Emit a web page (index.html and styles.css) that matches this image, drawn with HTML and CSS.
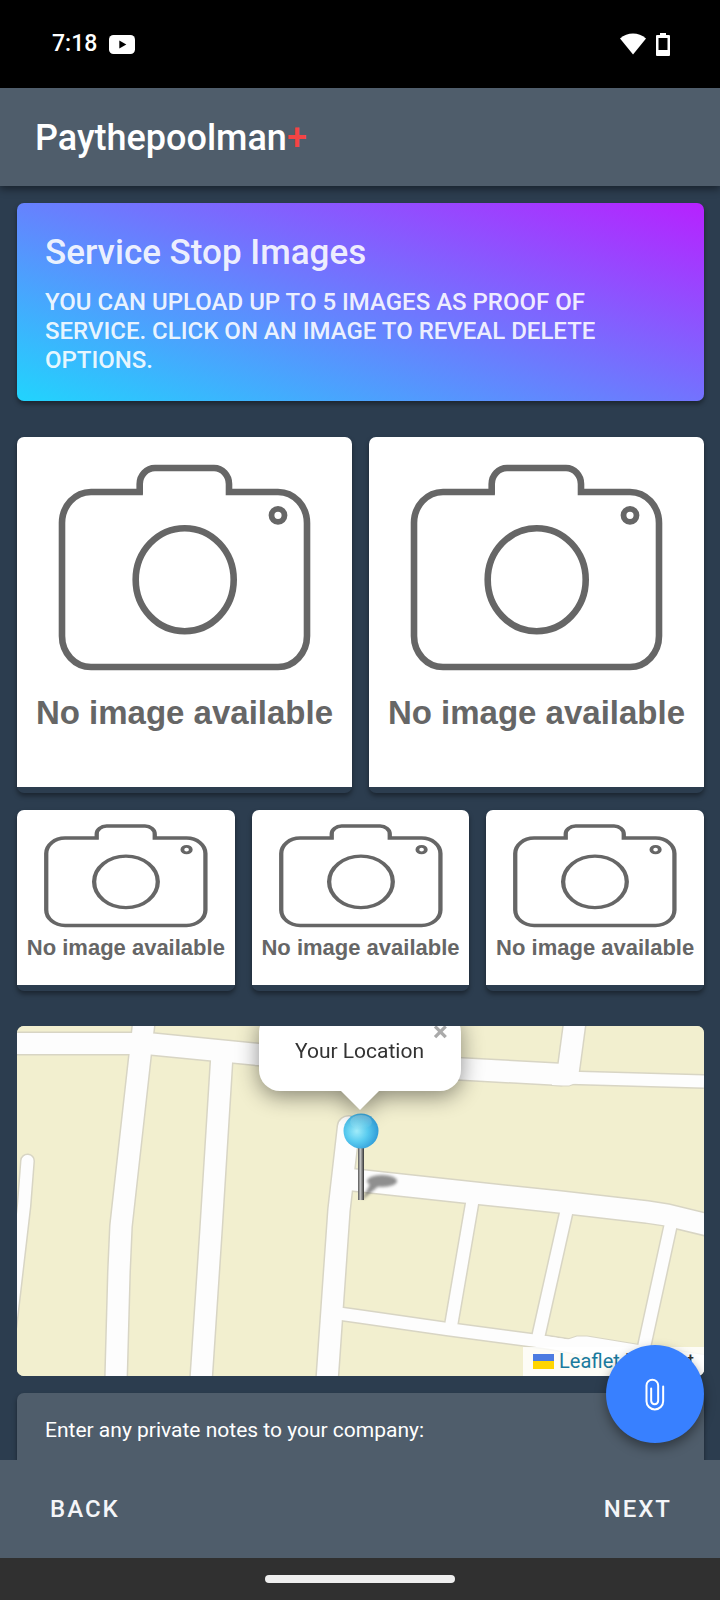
FILE: index.html
```
<!DOCTYPE html>
<html lang="en">
<head>
<meta charset="utf-8">
<meta name="viewport" content="width=device-width, initial-scale=1">
<title>Paythepoolman+</title>
<link rel="stylesheet" href="styles.css">
</head>
<body>
<svg class="defs" aria-hidden="true">
  <defs>
    <g id="camera" fill="none" stroke="#666" stroke-width="6.6">
      <path d="M125.900 56H74a29 31 0 0 0-29 31V200a29 31 0 0 0 29 31H261a29 31 0 0 0 29-31V87a29 31 0 0 0-29-31H212V48a15 16 0 0 0-15-16H138a15.300 16 0 0 0-15.300 16V58"/>
      <ellipse cx="167.700" cy="143.700" rx="49" ry="51.500"/>
      <circle cx="261" cy="79.300" r="6.500" stroke-width="5.800"/>
    </g>
  </defs>
</svg>
<div class="app">
  <div class="status">
    <div class="status-group">
      <span class="clock">7:18</span>
      <svg width="26" height="19" viewBox="0 0 26 19" aria-hidden="true"><rect width="26" height="19" rx="4.500" fill="#fff"/><path d="M10.300 5.600v8l7-4z" fill="#000"/></svg>
    </div>
    <div class="status-group status-icons">
      <svg width="26" height="22" viewBox="0 0 26 22" aria-hidden="true"><path d="M13 21.500 0 5.500C7.500-1.300 18.500-1.300 26 5.500Z" fill="#fff"/></svg>
      <svg width="14" height="23" viewBox="0 0 14 23" aria-hidden="true"><path fill="#fff" fill-rule="evenodd" d="M4 0h6v2h3q1 0 1 1v19q0 1-1 1H1q-1 0-1-1V3q0-1 1-1h3zM2.500 5v12h9V5z"/></svg>
    </div>
  </div>

  <header class="appbar"><h1 class="brand">Paythepoolman<span class="plus">+</span></h1></header>

  <div class="body">
    <main class="content">
      <section class="banner">
        <h2 class="banner-title">Service Stop Images</h2>
        <p class="banner-text">YOU CAN UPLOAD UP TO 5 IMAGES AS PROOF OF SERVICE. CLICK ON AN IMAGE TO REVEAL DELETE OPTIONS.</p>
      </section>

      <section class="gallery">
        <div class="row row-large">
          <figure class="tile"><div class="photo"><svg class="camera" viewBox="0 1 335 257" preserveAspectRatio="none" aria-hidden="true"><use href="#camera"/></svg><figcaption>No image available</figcaption></div></figure>
          <figure class="tile"><div class="photo"><svg class="camera" viewBox="0 1 335 257" preserveAspectRatio="none" aria-hidden="true"><use href="#camera"/></svg><figcaption>No image available</figcaption></div></figure>
        </div>
        <div class="row row-small">
          <figure class="tile"><div class="photo"><svg class="camera" viewBox="0 0 335 250" preserveAspectRatio="none" aria-hidden="true"><use href="#camera"/></svg><figcaption>No image available</figcaption></div></figure>
          <figure class="tile"><div class="photo"><svg class="camera" viewBox="0 0 335 250" preserveAspectRatio="none" aria-hidden="true"><use href="#camera"/></svg><figcaption>No image available</figcaption></div></figure>
          <figure class="tile"><div class="photo"><svg class="camera" viewBox="0 0 335 250" preserveAspectRatio="none" aria-hidden="true"><use href="#camera"/></svg><figcaption>No image available</figcaption></div></figure>
        </div>
      </section>

      <section class="map" aria-label="Map">
        <svg class="streets" viewBox="0 0 687 350" preserveAspectRatio="xMidYMid slice" aria-hidden="true">
          <defs>
            <g id="wide">
              <path d="M-5 17.500H118L135 18 241 28.500 445 43 546 48.500"/>
              <path d="M127-5 123 30 104 200 102 245 99 355"/>
              <path d="M205 28 194 204 184 355"/>
              <path d="M331.500 101 322 184 310 355" stroke-linecap="round"/>
              <path d="M328 153 448 166 543 176 630 186 650 189 695 200"/>
              <path d="M558-5 551 47"/>
            </g>
            <g id="narrow">
              <path d="M545 51.500 687 55.500"/>
              <path d="M318 287 343 290.500 430 303 528 316 560 321"/>
              <path d="M456 172 434 300"/>
              <path d="M550 183 521 312"/>
              <path d="M655 193 624 335"/>
              <path d="M10.500 135 7 180-7 300" stroke-linecap="round"/>
            </g>
            <path id="bend" d="M527 310 551 313.500 560 310.500 570 310.500 622 319 700 331V352L640 345 522 320Z"/>
            <path id="corner" d="M535 45H561V56L552 59.500H546L535 59Z"/>
          </defs>
          <rect width="687" height="350" fill="#f2efcf"/>
          <g fill="none" stroke="#d8d5c4">
            <use href="#wide" stroke-width="24"/><use href="#narrow" stroke-width="15"/><use href="#bend" stroke-width="2"/><use href="#corner" stroke-width="2"/>
          </g>
          <g fill="none" stroke="#fdfdfd">
            <use href="#wide" stroke-width="21"/><use href="#narrow" stroke-width="12"/><use href="#bend" fill="#fdfdfd" stroke="none"/><use href="#corner" fill="#fdfdfd" stroke="none"/>
          </g>
        </svg>

        <svg class="pin" width="60" height="90" viewBox="0 0 60 90" aria-hidden="true">
          <defs>
            <radialGradient id="ball" cx=".38" cy=".5" r=".62"><stop offset="0" stop-color="#a2edfb"/><stop offset=".5" stop-color="#5accf0"/><stop offset="1" stop-color="#2f9bd8"/></radialGradient>
            <linearGradient id="shine" x2="0" y2="1"><stop offset="0" stop-color="#fff" stop-opacity=".3"/><stop offset="1" stop-color="#fff" stop-opacity="0"/></linearGradient>
            <linearGradient id="needle"><stop offset="0" stop-color="#555"/><stop offset=".4" stop-color="#c4c4c4"/><stop offset="1" stop-color="#333"/></linearGradient>
            <filter id="soft" x="-20%" y="-20%" width="140%" height="140%"><feGaussianBlur stdDeviation="1.800"/></filter>
          </defs>
          <g filter="url(#soft)" fill="#555" opacity=".65"><ellipse cx="39" cy="70" rx="15" ry="6"/><path d="M19 89 28 71 38 73Z"/></g>
          <rect x="15" y="33" width="6" height="56" fill="url(#needle)"/>
          <circle cx="18" cy="20" r="17.500" fill="url(#ball)"/>
          <ellipse cx="18" cy="11" rx="11" ry="7" fill="url(#shine)"/>
        </svg>

        <div class="popup">
          <div class="popup-box">
            <button class="popup-close" type="button" aria-label="Close">×</button>
            <p class="popup-text">Your Location</p>
          </div>
        </div>

        <div class="attribution">
          <svg width="21" height="15" viewBox="0 0 21 15" aria-hidden="true"><path fill="#4c7be1" d="M0 0h21v8H0z"/><path fill="#ffd500" d="M0 7h21v8H0z"/></svg>
          <a href="#leaflet">Leaflet</a><span>| Tileset</span>
        </div>
      </section>

      <section class="notes">
        <label for="notes">Enter any private notes to your company:</label>
        <textarea id="notes" rows="4"></textarea>
      </section>
    </main>
    <button class="fab" type="button" aria-label="Attach image">
      <svg width="22" height="35" viewBox="131.500 123.500 66 105" aria-hidden="true"><path fill="none" stroke="#fff" stroke-width="6" stroke-linecap="round" d="M189 152V196a25 25 0 0 1-50 0V149a17.500 17.500 0 0 1 35 0V195a10.500 10.500 0 0 1-21 0V158"/></svg>
    </button>
  </div>

  <nav class="actions">
    <button type="button">BACK</button>
    <button type="button">NEXT</button>
  </nav>
  <div class="system"><span class="handle"></span></div>
</div>
</body>
</html>
```
FILE: styles.css
```
* { box-sizing: border-box; }

body {
  margin: 0;
  background: #2c3d4f;
  color: #fff;
  font-family: Roboto, "Liberation Sans", sans-serif;
}

h1, h2, p, figure { margin: 0; }

button { border: 0; background: none; color: inherit; font: inherit; cursor: pointer; }

.defs { position: absolute; width: 0; height: 0; }

.app { display: flex; flex-direction: column; height: 100vh; }

.status {
  display: flex;
  flex: none;
  align-items: center;
  justify-content: space-between;
  padding: 0 50px 0 52px;
  height: 88px;
  background: #000;
}
.status-group { display: flex; align-items: center; gap: 12px; }
.status-icons { gap: 10px; }
.clock { font-size: 23px; line-height: 28px; font-weight: 500; }

.appbar {
  position: relative;
  z-index: 2;
  display: flex;
  flex: none;
  align-items: center;
  padding: 2px 35px 0;
  height: 98px;
  background: #4f5d6b;
  box-shadow: 0 3px 8px rgba(0, 0, 0, .45);
}
.brand { font-size: 36px; line-height: 42px; font-weight: 500; }
.plus { color: #f44444; }

.body { position: relative; flex: 1; min-height: 0; }

.content {
  display: flex;
  flex-direction: column;
  height: 100%;
  padding: 17px 16px 0 17px;
  overflow-y: auto;
  scrollbar-width: none;
}
.content > * { flex: none; }

.banner {
  padding: 29px 28px 26px;
  border-radius: 7px;
  background: linear-gradient(19deg, #21d4fd 0%, #b721ff 100%);
  box-shadow: 0 3px 5px rgba(0, 0, 0, .4);
  color: rgba(255, 255, 255, .9);
}
.banner-title { font-size: 35px; line-height: 42px; font-weight: 500; }
.banner-text { margin-top: 14px; font-size: 24px; line-height: 29px; font-weight: 500; }

.gallery { display: grid; gap: 17px; margin: 36px 0 35px; }
.row { display: grid; gap: 17px; }
.row-large { grid-template-columns: repeat(2, 1fr); }
.row-small { grid-template-columns: repeat(3, 1fr); }

.tile {
  padding-bottom: 6px;
  border-radius: 7px;
  background: #2c3d4f;
  box-shadow: 0 3px 5px rgba(0, 0, 0, .4);
}
.photo {
  display: flex;
  flex-direction: column;
  border-radius: 7px 7px 0 0;
  background: #fff;
  color: #666;
  font: bold 33px/38px "Liberation Sans", sans-serif;
  text-align: center;
  white-space: nowrap;
}
.camera { display: block; width: 100%; height: 257px; }
.row-large .photo { height: 350px; }
.row-small .photo { height: 175px; font-size: 22px; line-height: 26px; }
.row-small .camera { height: 125px; }

.map {
  position: relative;
  height: 350px;
  border-radius: 7px;
  overflow: hidden;
  background: #f2efcf;
}
.streets { display: block; width: 100%; height: 100%; }

.pin { position: absolute; left: calc(50% - 18px); top: 85px; }

.popup {
  position: absolute;
  bottom: 285px;
  left: 50%;
  width: 202px;
  margin-left: -102px;
  filter: drop-shadow(0 5px 11px rgba(0, 0, 0, .45));
  color: #333;
}
.popup::after {
  content: "";
  position: absolute;
  top: 100%;
  left: 50%;
  margin-left: -19px;
  border: 19px solid transparent;
  border-bottom: 0;
  border-top-color: #fff;
}
.popup-box { padding: 28px 0; border-radius: 21px; background: #fff; text-align: center; }
.popup-text { font-size: 21px; line-height: 24px; }
.popup-close {
  position: absolute;
  top: 0;
  right: 6px;
  padding: 0;
  width: 28px;
  color: #aaa;
  font-size: 28px;
  line-height: 42px;
  font-weight: 700;
}

.attribution {
  position: absolute;
  right: 0;
  bottom: 0;
  display: flex;
  align-items: center;
  gap: 5px;
  padding: 0 10px;
  background: rgba(255, 255, 255, .8);
  color: #333;
  font-size: 20px;
  line-height: 29px;
}
.attribution a { color: #1a7a9e; text-decoration: none; }

.notes {
  display: flex;
  flex-direction: column;
  gap: 20px;
  margin-top: 17px;
  padding: 24px 28px;
  border-radius: 7px;
  background: #4f5d6b;
  box-shadow: 0 3px 5px rgba(0, 0, 0, .4);
  font-size: 21px;
  line-height: 26px;
}
.notes textarea {
  border: 0;
  border-bottom: 1px solid #9aa4ad;
  background: transparent;
  color: inherit;
  font: inherit;
  resize: none;
}

.fab {
  position: absolute;
  right: 16px;
  bottom: 17px;
  display: grid;
  place-items: center;
  width: 98px;
  height: 98px;
  padding: 0;
  border-radius: 50%;
  background: #3880ff;
  box-shadow: 0 5px 12px rgba(0, 0, 0, .4);
}

.actions {
  position: relative;
  display: flex;
  flex: none;
  align-items: center;
  justify-content: space-between;
  padding: 0 32px 0 34px;
  height: 98px;
  background: #4f5d6b;
}
.actions button {
  padding: 16px;
  color: #f4f5f8;
  font-size: 24px;
  line-height: 28px;
  font-weight: 500;
  letter-spacing: 2px;
}

.system {
  display: grid;
  flex: none;
  place-items: center;
  height: 42px;
  background: #303030;
}
.handle { width: 190px; height: 8px; border-radius: 4px; background: #eee; }
```
